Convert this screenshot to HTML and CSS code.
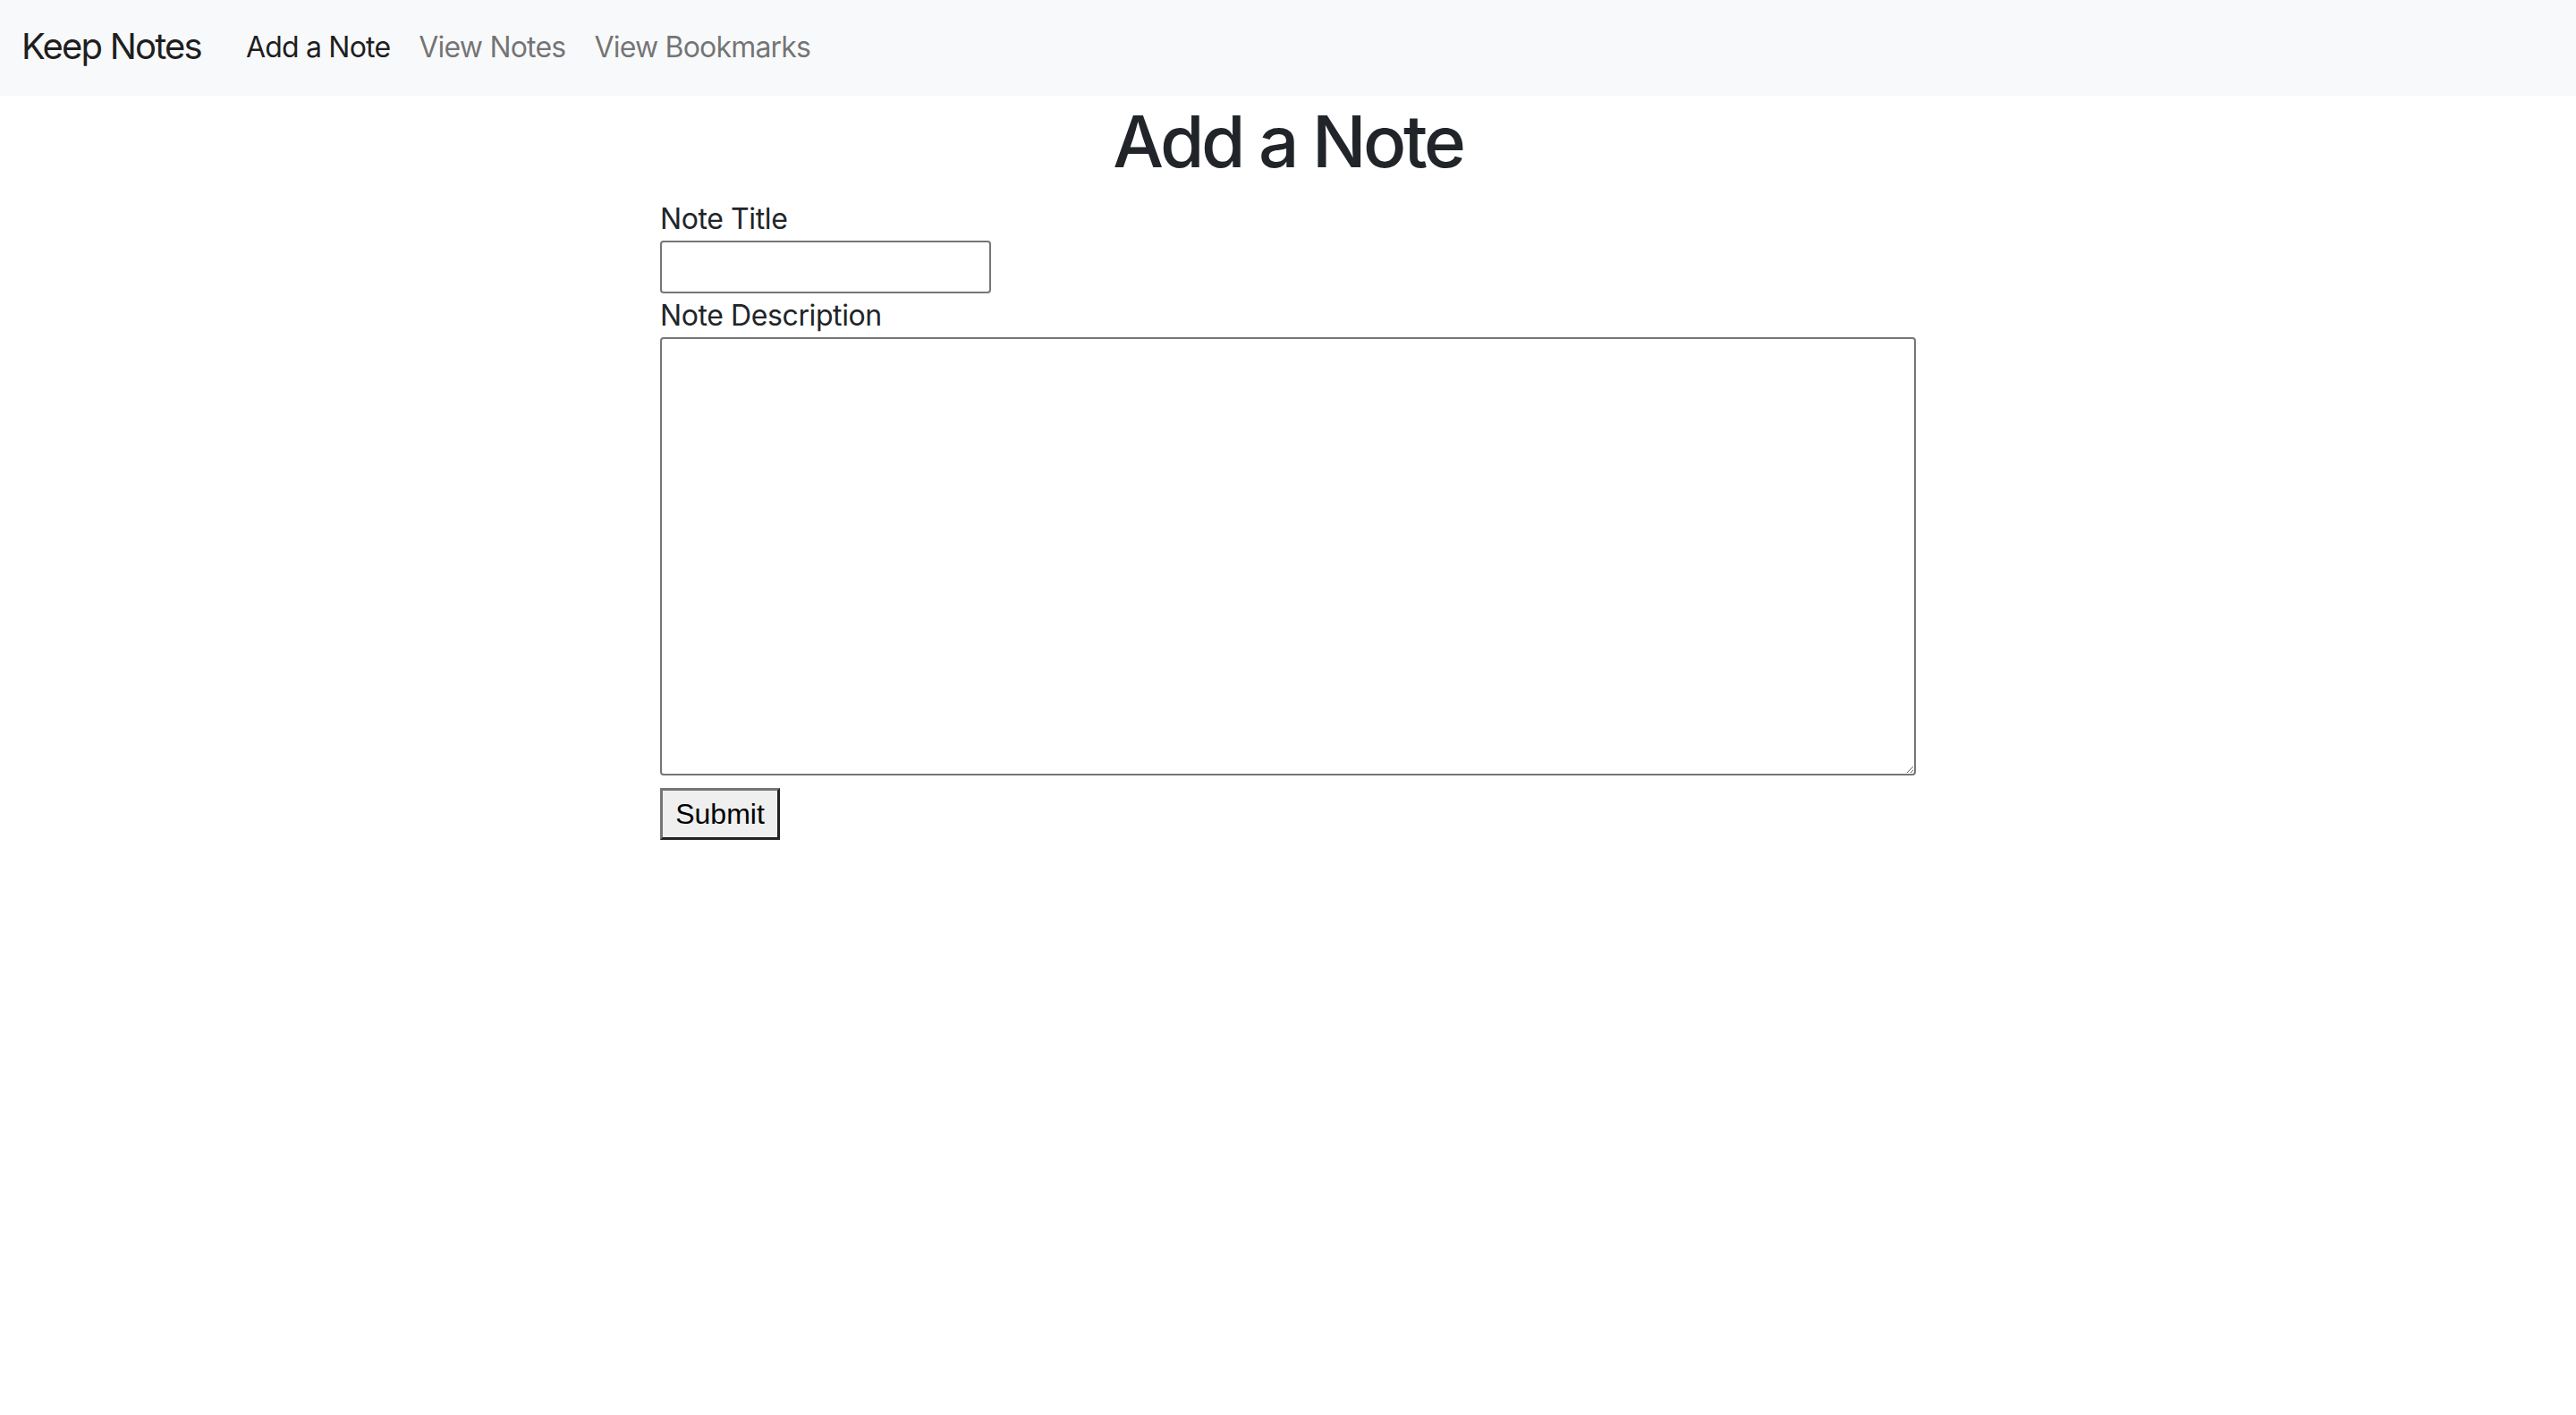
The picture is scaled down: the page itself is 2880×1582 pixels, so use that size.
FILE: index.html
```html
<!DOCTYPE html>
<html lang="en">
<head>
<meta charset="utf-8">
<title>Keep Notes</title>
<link rel="stylesheet" href="styles.css">
</head>
<body>
<nav class="navbar">
  <a class="brand" href="#">Keep Notes</a>
  <ul class="nav">
    <li><a class="nav-link active" href="#">Add a Note</a></li>
    <li><a class="nav-link" href="#">View Notes</a></li>
    <li><a class="nav-link" href="#">View Bookmarks</a></li>
  </ul>
</nav>
<main class="page">
  <h1 class="title">Add a Note</h1>
  <form class="note-form">
    <label class="label" for="t">Note Title</label>
    <input class="title-input" id="t" type="text">
    <label class="label" for="d">Note Description</label>
    <textarea class="desc-input" id="d"></textarea>
    <button class="submit" type="submit">Submit</button>
  </form>
</main>
</body>
</html>
```

FILE: styles.css
```css
* { box-sizing: border-box; }
html, body { margin: 0; padding: 0; background: #fff; }
body {
  font-family: Inter, "Noto Sans", sans-serif;
  color: #212529;
}
.navbar {
  display: flex;
  align-items: center;
  height: 107px;
  padding: 0 24px;
  background: #f8f9fa;
}
.brand {
  font-size: 40px;
  line-height: 60px;
  padding-bottom: 4px;
  margin-right: 34px;
  color: rgba(0,0,0,0.9);
  text-decoration: none;
  letter-spacing: -1.8px;
}
.nav {
  display: flex;
  list-style: none;
  margin: 0;
  padding: 0;
}
.nav-link {
  display: block;
  font-size: 32px;
  line-height: 48px;
  padding: 0 16px 2px;
  color: rgba(0,0,0,0.55);
  text-decoration: none;
  letter-spacing: -0.8px;
}
.nav-link.active { color: rgba(0,0,0,0.9); }
.page {
  width: 1404px;
  margin: 0 auto;
}
.title {
  margin: 0 0 15px;
  padding-top: 3px;
  font-size: 80px;
  line-height: 96px;
  font-weight: 500;
  text-align: center;
  letter-spacing: -3.4px;
}
.note-form {
  display: flex;
  flex-direction: column;
  align-items: flex-start;
}
.label {
  font-size: 32px;
  line-height: 48px;
  letter-spacing: -0.4px;
}
.title-input {
  width: 370px;
  height: 59px;
  margin: 0 0 1px;
  border: 2px solid #767676;
  border-radius: 4px;
  font-size: 26px;
  padding: 2px 4px;
}
.desc-input {
  width: 1404px;
  height: 490px;
  margin: 0;
  border: 2px solid #767676;
  border-radius: 4px;
  font-size: 26px;
  font-family: "Liberation Mono", monospace;
  padding: 4px;
}
.submit {
  margin-top: 14px;
  width: 134px;
  height: 58px;
  padding: 0;
  font-family: "Liberation Sans", Arial, sans-serif;
  font-size: 32px;
  color: #000;
  background: #efefef;
  border-style: solid;
  border-width: 3px;
  border-color: #767676 #222 #222 #767676;
  border-radius: 0;
}
```
